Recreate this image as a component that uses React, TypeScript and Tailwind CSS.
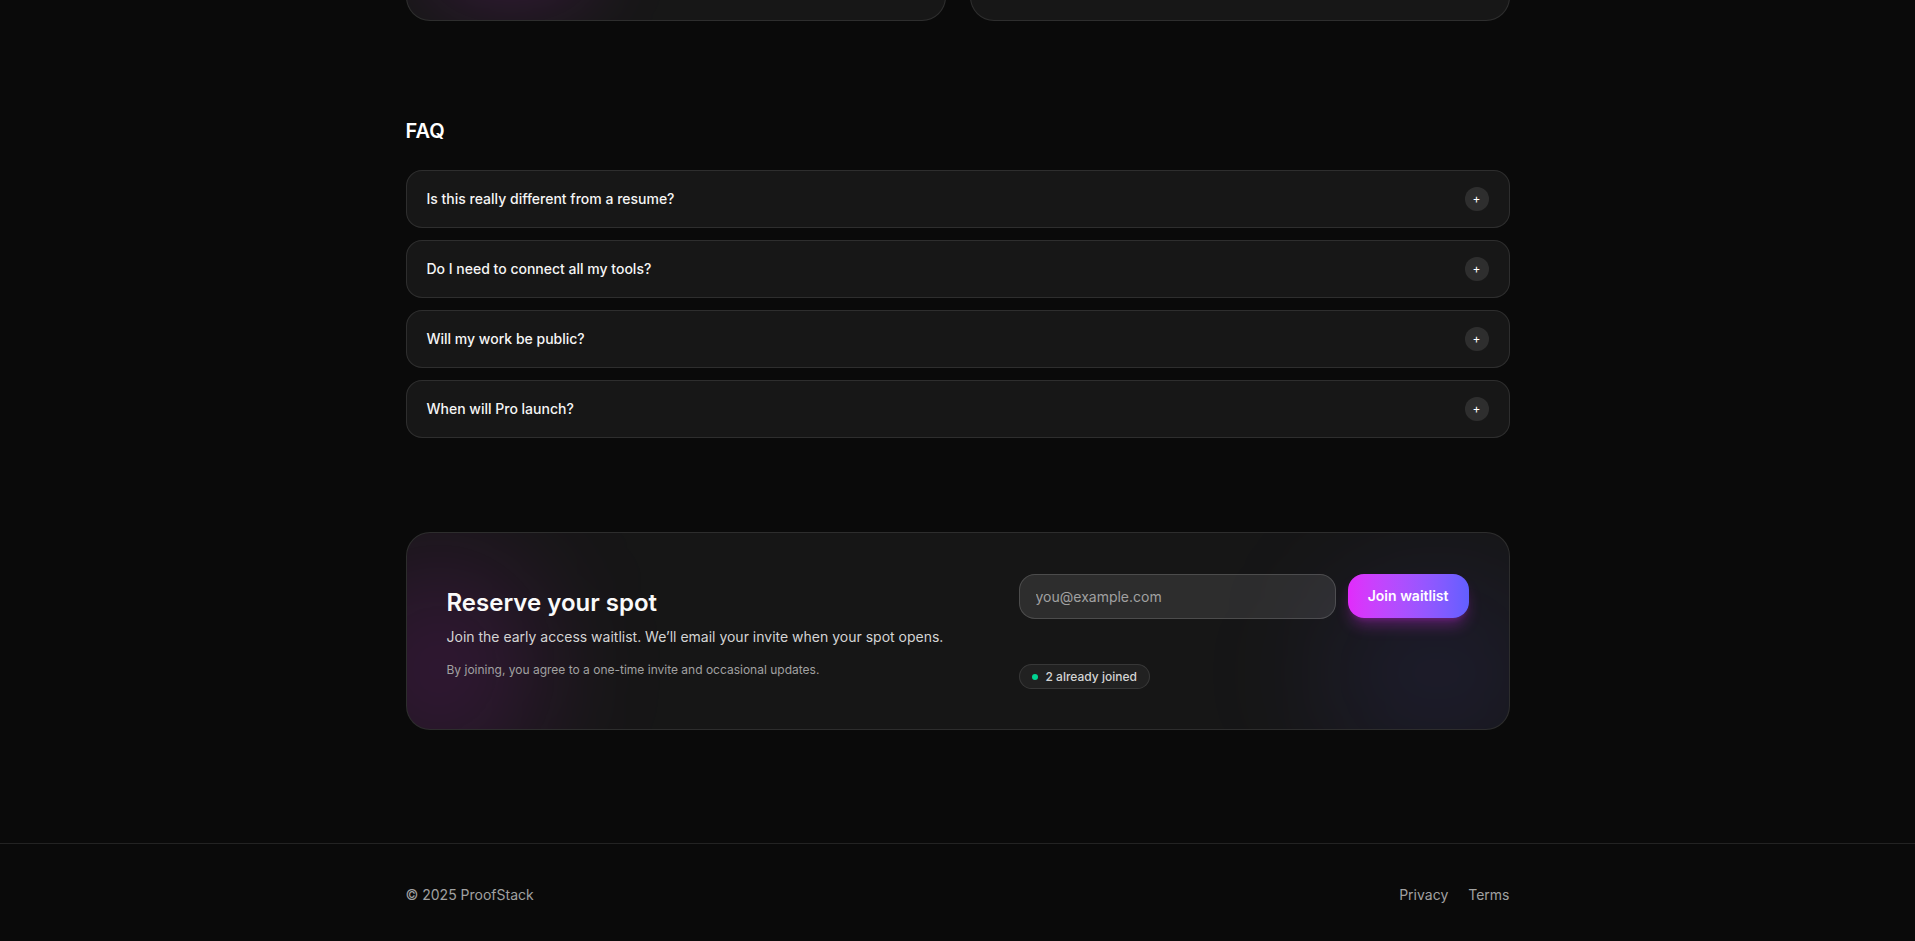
import { useState } from 'react'

const faqs = [
  'Is this really different from a resume?',
  'Do I need to connect all my tools?',
  'Will my work be public?',
  'When will Pro launch?',
]

function FaqItem({ q }: { q: string }) {
  return (
    <div className="rounded-2xl border border-white/10 bg-[#171717]">
      <button className="flex w-full items-center justify-between px-5 py-4 text-left">
        <span className="text-sm font-medium text-neutral-100">{q}</span>
        <span className="flex h-6 w-6 items-center justify-center rounded-full bg-white/10 text-xs leading-none text-white">
          +
        </span>
      </button>
    </div>
  )
}

export default function App() {
  const [email, setEmail] = useState('')

  return (
    <div className="min-h-screen bg-[#0a0a0a] font-['Inter',sans-serif] text-white">
      {/* Cards above, scrolled off the top */}
      <div className="mx-auto flex h-[21px] max-w-6xl items-end overflow-hidden px-6">
        <div className="grid w-full shrink-0 grid-cols-2 gap-6">
          <div className="relative h-40 overflow-hidden rounded-3xl border border-white/10 bg-[#171717]">
            <div className="absolute bottom-6 left-6 h-16 w-40 rounded-full bg-fuchsia-500/20 blur-2xl" />
          </div>
          <div className="h-40 rounded-3xl border border-white/10 bg-[#171717]" />
        </div>
      </div>

      {/* FAQ */}
      <section className="mx-auto max-w-6xl px-6 pb-[94px] pt-24">
        <h2 className="mb-[25px] text-xl font-semibold">FAQ</h2>
        <div className="flex flex-col gap-3">
          {faqs.map((q) => (
            <FaqItem key={q} q={q} />
          ))}
        </div>
      </section>

      {/* Waitlist */}
      <section className="mx-auto max-w-6xl px-6 pb-12">
        <div className="relative overflow-hidden rounded-3xl border border-white/10 bg-[#161616] px-10 pb-10 pt-[41px]">
          <div className="pointer-events-none absolute -left-16 top-6 h-56 w-48 rounded-full bg-fuchsia-500/15 blur-3xl" />
          <div className="pointer-events-none absolute -right-10 bottom-[-40px] h-48 w-56 rounded-full bg-indigo-500/10 blur-3xl" />

          <div className="relative flex items-center justify-between">
            <div className="pt-1">
              <h3 className="text-2xl font-semibold text-neutral-50">Reserve your spot</h3>
              <p className="mt-[7px] text-sm leading-[22px] text-neutral-300">
                Join the early access waitlist. We’ll email your invite when your spot opens.
              </p>
              <p className="mt-3 text-xs leading-5 text-neutral-400">
                By joining, you agree to a one-time invite and occasional updates.
              </p>
            </div>

            <div className="w-[450px] self-start">
              <form className="flex gap-3" onSubmit={(e) => e.preventDefault()}>
                <input
                  type="email"
                  value={email}
                  onChange={(e) => setEmail(e.target.value)}
                  placeholder="you@example.com"
                  className="h-[45px] flex-1 rounded-2xl border border-white/15 bg-white/10 px-4 text-sm text-white placeholder:text-neutral-400 outline-none"
                />
                <button className="h-11 rounded-2xl bg-gradient-to-r from-fuchsia-500 to-indigo-500 px-5 text-sm font-semibold text-white shadow-lg shadow-fuchsia-500/30">
                  Join waitlist
                </button>
              </form>
              <div className="mt-[45px] inline-flex h-[25px] items-center gap-2 rounded-full border border-white/10 bg-white/5 px-3 text-xs font-medium text-neutral-300">
                <span className="h-1.5 w-1.5 rounded-full bg-emerald-400" />
                2 already joined
              </div>
            </div>
          </div>
        </div>
      </section>

      <footer className="mt-[65px] border-t border-white/10">
        <div className="mx-auto flex max-w-6xl items-center justify-between px-6 pb-[35px] pt-[41px] text-sm text-neutral-400">
          <span>© 2025 ProofStack</span>
          <div className="flex gap-5">
            <a href="#">Privacy</a>
            <a href="#">Terms</a>
          </div>
        </div>
      </footer>
    </div>
  )
}
